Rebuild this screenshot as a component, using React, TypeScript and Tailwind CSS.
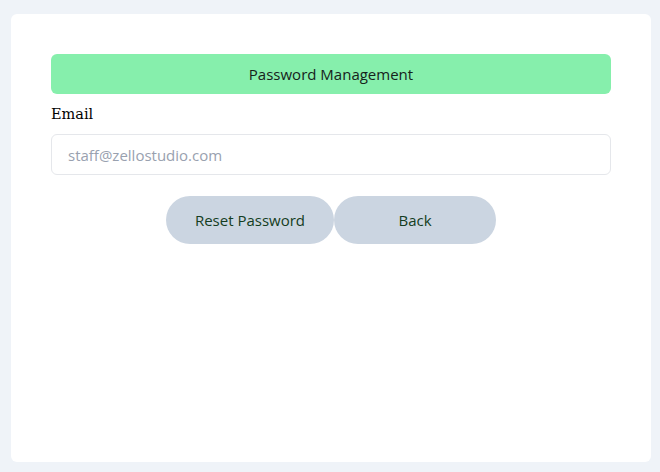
export default function App() {
  return (
    <div className="min-h-[472px] bg-[#eff3f8] pt-[14px] pl-[11px] pr-[9px] pb-[10px]">
      <div className="h-[448px] w-[640px] rounded-md bg-white px-10 pt-10">
        <div className="flex h-10 items-center justify-center rounded-md bg-[#86efac] font-['Open_Sans',sans-serif] text-[15px] font-medium text-[#16231b]">
          Password Management
        </div>
        <label className="mt-[10px] block font-['DejaVu_Serif',serif] text-[14.5px] leading-[20px] text-black">
          Email
        </label>
        <input
          type="email"
          placeholder="staff@zellostudio.com"
          className="mt-[10px] block h-[41px] w-full rounded-md border border-gray-200 px-4 font-['Open_Sans',sans-serif] text-[15px] placeholder:text-gray-400 outline-none"
        />
        <div className="mt-[21px] flex justify-center">
          <button className="h-12 w-[168px] rounded-full bg-[#cbd5e1] font-['Open_Sans',sans-serif] text-[15px] font-medium text-[#143d22]">
            Reset Password
          </button>
          <button className="h-12 w-[162px] rounded-full bg-[#cbd5e1] font-['Open_Sans',sans-serif] text-[15px] font-medium text-[#143d22]">
            Back
          </button>
        </div>
      </div>
    </div>
  );
}
